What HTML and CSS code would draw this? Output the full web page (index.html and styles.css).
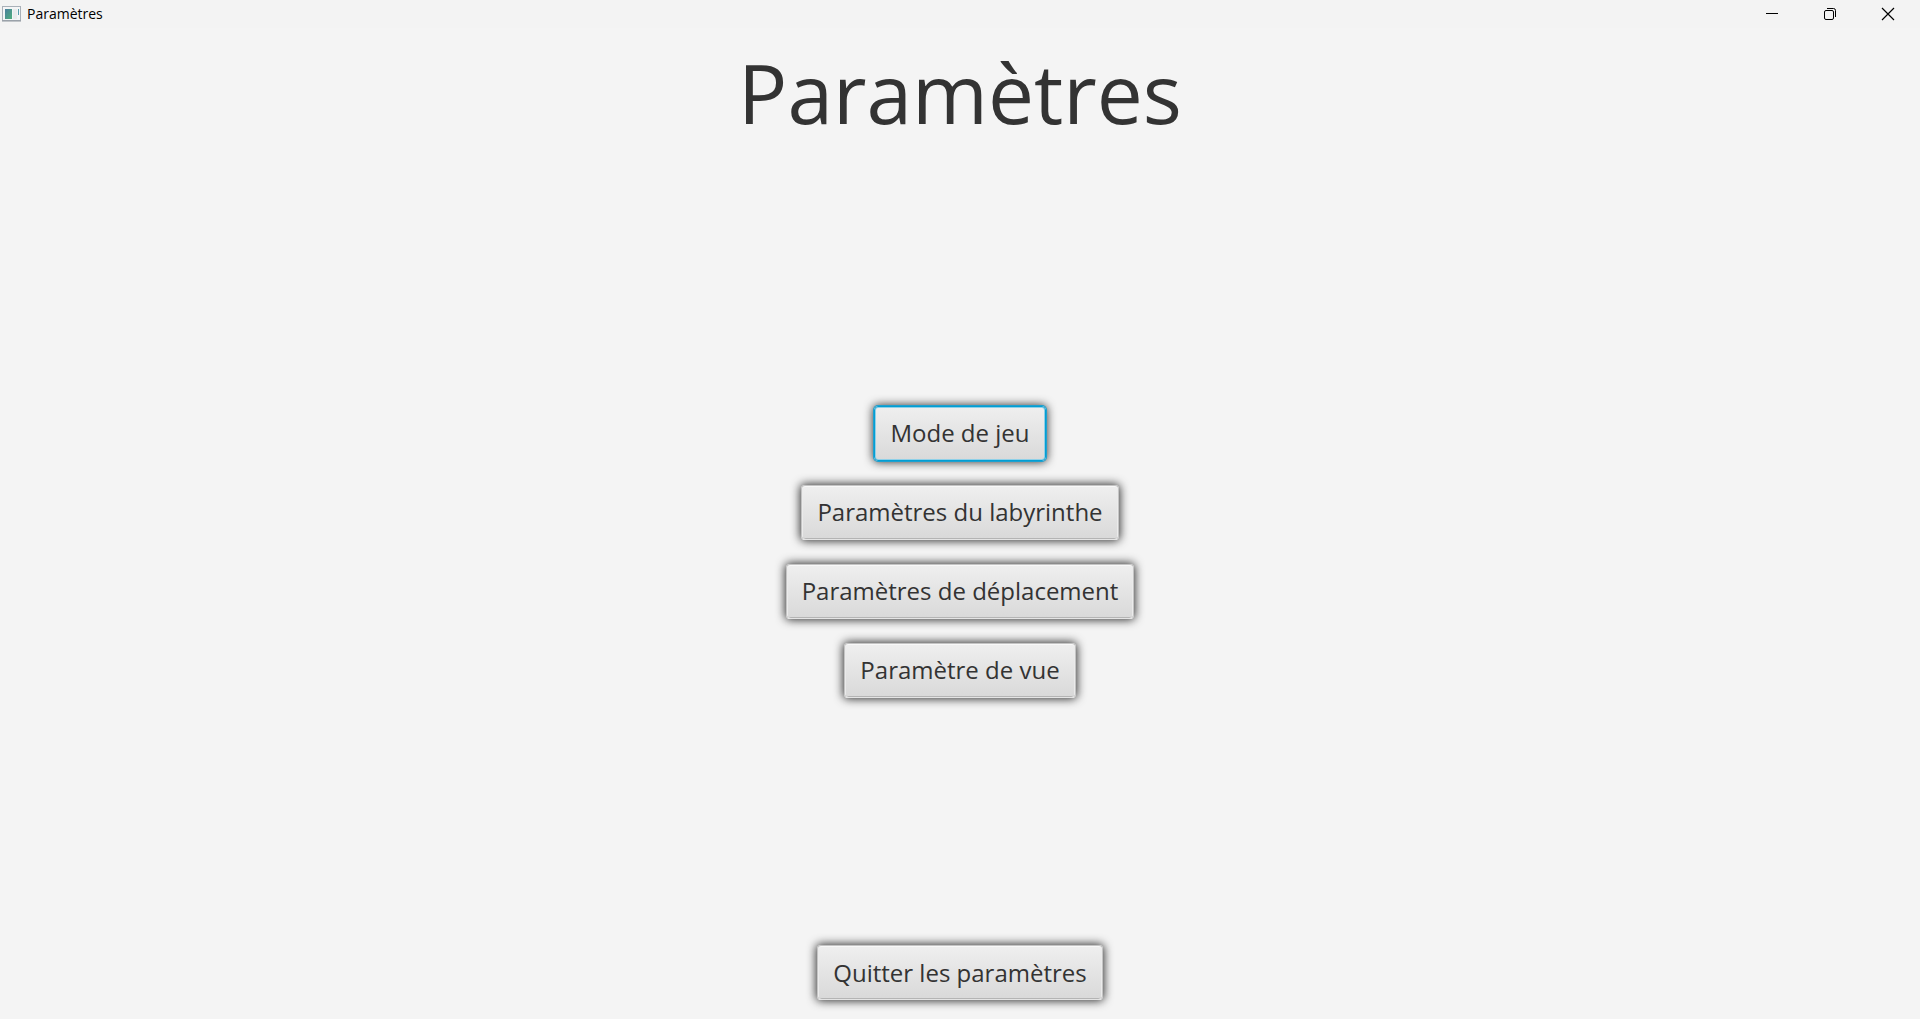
FILE: index.html
```html
<!DOCTYPE html>
<html lang="fr">
<head>
<meta charset="utf-8">
<title>Paramètres</title>
<link rel="stylesheet" href="styles.css">
</head>
<body>
<header class="titlebar">
  <svg class="app-icon" width="19" height="16" viewBox="0 0 19 16" aria-hidden="true">
    <defs>
      <linearGradient id="pane" x1="0" y1="0" x2="1" y2="1">
        <stop offset="0" stop-color="#4a7f9e"/>
        <stop offset="1" stop-color="#4fae7c"/>
      </linearGradient>
    </defs>
    <rect x="0.5" y="0.5" width="18" height="14" fill="#f4f5f6" stroke="#a9b0b8"/>
    <path d="M0 15h19" stroke="#8d959d"/>
    <rect x="3" y="3" width="7" height="10" fill="url(#pane)"/>
    <rect x="11" y="3" width="4" height="10" fill="#e9ebec"/>
    <rect x="16" y="3" width="1" height="6" fill="#5b9fb0"/>
  </svg>
  <span class="window-title">Paramètres</span>
  <div class="window-controls">
    <button class="control" type="button" aria-label="Réduire">
      <svg width="14" height="14" viewBox="0 0 14 14"><path d="M1 6.500h12" stroke="#000"/></svg>
    </button>
    <button class="control" type="button" aria-label="Restaurer">
      <svg width="14" height="14" viewBox="0 0 14 14" fill="none" stroke="#000"><rect x="1.500" y="3.500" width="9" height="9" rx="1.500"/><path d="M4 1.500h6.500a2 2 0 0 1 2 2V10"/></svg>
    </button>
    <button class="control" type="button" aria-label="Fermer">
      <svg width="14" height="14" viewBox="0 0 14 14"><path d="M1 1l12 12M13 1L1 13" stroke="#000" stroke-width="1.200"/></svg>
    </button>
  </div>
</header>
<main class="screen">
  <h1 class="heading">Paramètres</h1>
  <nav class="menu">
    <button class="button button-focused" type="button">Mode de jeu</button>
    <button class="button" type="button">Paramètres du labyrinthe</button>
    <button class="button" type="button">Paramètres de déplacement</button>
    <button class="button" type="button">Paramètre de vue</button>
  </nav>
  <button class="button" type="button">Quitter les paramètres</button>
</main>
</body>
</html>
```

FILE: styles.css
```css
* {
  box-sizing: border-box;
}

body {
  margin: 0;
  min-height: 100vh;
  display: flex;
  flex-direction: column;
  background: #f4f4f4;
  color: #333;
  font-family: "Open Sans", "Noto Sans", sans-serif;
}

.titlebar {
  display: flex;
  align-items: center;
  height: 28px;
  padding-left: 2px;
  background: #f3f3f3;
  color: #000;
}

.app-icon {
  margin-right: 6px;
}

.window-title {
  font-size: 14px;
  line-height: 18px;
}

.window-controls {
  display: flex;
  height: 100%;
  margin-left: auto;
  padding-right: 3px;
}

.control {
  display: flex;
  align-items: center;
  justify-content: center;
  width: 58px;
  padding: 0;
  border: 0;
  background: none;
}

.screen {
  flex: 1;
  display: flex;
  flex-direction: column;
  align-items: center;
  padding-bottom: 19px;
}

.heading {
  margin: 0;
  padding: 4px 0 6px;
  font-size: 82px;
  font-weight: 400;
  line-height: 120px;
}

.menu {
  flex: 1;
  display: flex;
  flex-direction: column;
  align-items: center;
  justify-content: center;
  gap: 24px;
}

.button {
  height: 55px;
  padding: 0 15px;
  border: 1px solid #c4c4c4;
  border-bottom-color: #e4e4e4;
  border-radius: 4px;
  background: linear-gradient(#efefef, #d9d9d9);
  box-shadow: inset 0 1px #f8f8f8, inset 1px 0 #ebebeb, inset -1px 0 #ebebeb, inset 0 -1px #b4b4b4, 0 0 10px 1px rgba(0, 0, 0, 0.8);
  color: #333;
  font-family: inherit;
  font-size: 24px;
  line-height: 36px;
}

.button-focused {
  border-color: #039ed3;
  box-shadow: inset 0 0 0 1px #8fd0e8, 0 0 0 1px #1fa0cf, 0 0 10px 1px rgba(0, 0, 0, 0.8);
}
```
